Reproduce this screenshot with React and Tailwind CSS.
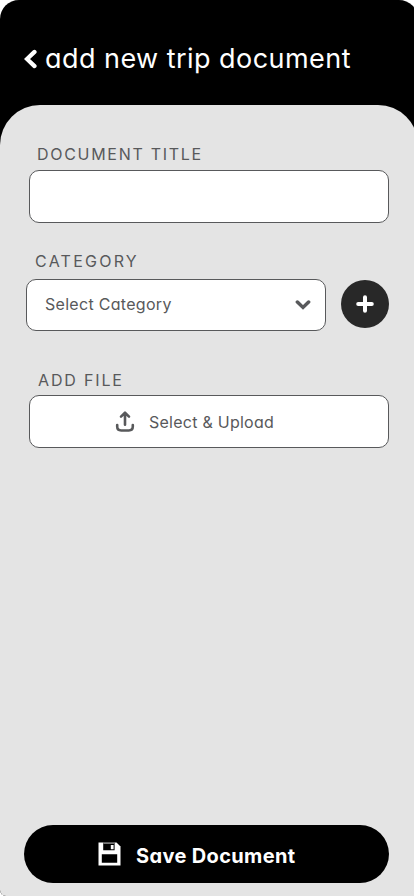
import React from "react";

function ChevronLeft() {
  return (
    <svg className="block h-[20px] w-[14px] shrink-0" viewBox="0 0 14 20" fill="none" stroke="white" strokeWidth="4.2" strokeLinecap="round">
      <path d="M10.5 2.9 3 10l7.5 7.1" strokeLinejoin="miter" />
    </svg>
  );
}

function ChevronDown() {
  return (
    <svg className="block h-[12px] w-[16px] shrink-0" viewBox="0 0 16 12" fill="none" stroke="#58595b" strokeWidth="3.5" strokeLinecap="round">
      <path d="M2.4 3 8 8.4 13.6 3" />
    </svg>
  );
}

function UploadIcon() {
  return (
    <svg className="-mt-[2px] block h-[22px] w-[20px] shrink-0" viewBox="0 0 20 22" fill="none" stroke="#58595b" strokeWidth="2.6" strokeLinecap="round" strokeLinejoin="round">
      <path d="M10 14.8V3M6 6.6 10 2.7l4 3.9" />
      <path d="M2.2 15v1.6q0 3.9 4 3.9h7.6q4 0 4-3.9V15" />
    </svg>
  );
}

function SaveIcon() {
  return (
    <svg className="block h-[24px] w-[23px] shrink-0" viewBox="0 0 23 24">
      <path d="M.5.5h18l4 4v19H.5z" fill="white" />
      <path d="M5.2.5h11.4v7.7H5.2zM3.8 12.3h15.4v8.5H3.8z" fill="black" />
      <path d="M5.2.5h11.4v1.4H5.2z" fill="#777" />
      <path d="M12.8 3h2.8v4.2h-2.8z" fill="white" />
    </svg>
  );
}

export default function App() {
  return (
    <div className="h-[896px] w-[414px] overflow-hidden bg-white font-['Inter','Noto_Sans',sans-serif] text-[#58595b] [font-feature-settings:'cv11']">
      <div className="flex h-[896px] w-[418px] flex-col overflow-hidden rounded-t-[19px] rounded-bl-[6px] bg-black">
        <header className="flex h-[105px] shrink-0 items-start pl-[24px] pt-[43px]">
          <div className="flex h-[32px] items-center gap-[7px]">
            <ChevronLeft />
            <h1 className="whitespace-nowrap text-[27px] font-normal leading-[32px] tracking-[0.45px] text-white">add new trip document</h1>
          </div>
        </header>
        <main className="flex flex-1 flex-col rounded-t-[40px] bg-[#e4e4e4]">
          <label className="ml-[37px] mt-[39px] h-[20px] whitespace-nowrap text-[16px] leading-[20px] tracking-[1.7px]">DOCUMENT TITLE</label>
          <input aria-label="Document title" className="ml-[29px] mt-[6px] h-[53px] w-[360px] shrink-0 rounded-[10px] border border-[#58595b] bg-white" />
          <label className="ml-[35px] mt-[28px] h-[20px] whitespace-nowrap text-[16px] leading-[20px] tracking-[2.25px]">CATEGORY</label>
          <div className="ml-[26px] mt-[8px] flex h-[52px] shrink-0 items-center">
            <button className="flex h-[52px] w-[300px] items-center justify-between rounded-[10px] border border-[#58595b] bg-white pl-[18px] pr-[14px]">
              <span className="-mt-[2px] text-[16px] leading-[24px] tracking-[0.3px]">Select Category</span>
              <ChevronDown />
            </button>
            <button aria-label="Add category" className="-mt-[2px] ml-[15px] flex size-[48px] items-center justify-center rounded-full bg-[#282828]">
              <svg className="block size-[18px]" viewBox="0 0 18 18" fill="none" stroke="white" strokeWidth="4" strokeLinecap="round">
                <path d="M9 2.2v13.6M2.2 9h13.6" />
              </svg>
            </button>
          </div>
          <label className="ml-[38px] mt-[39px] h-[20px] whitespace-nowrap text-[16px] leading-[20px] tracking-[1.85px]">ADD FILE</label>
          <button className="ml-[29px] mt-[5px] flex h-[53px] w-[360px] shrink-0 items-center gap-[14px] rounded-[10px] border border-[#58595b] bg-white pl-[85px]">
            <UploadIcon />
            <span className="whitespace-nowrap text-[16px] leading-[24px] tracking-[0.25px]">Select &amp; Upload</span>
          </button>
          <button className="mb-[13px] ml-[24px] mt-auto flex h-[58px] w-[365px] shrink-0 items-center gap-[15px] rounded-full bg-black pl-[74px] text-white">
            <SaveIcon />
            <span className="whitespace-nowrap pt-[4px] text-[20px] font-bold leading-[28px] tracking-[0.35px]">Save Document</span>
          </button>
        </main>
      </div>
    </div>
  );
}
